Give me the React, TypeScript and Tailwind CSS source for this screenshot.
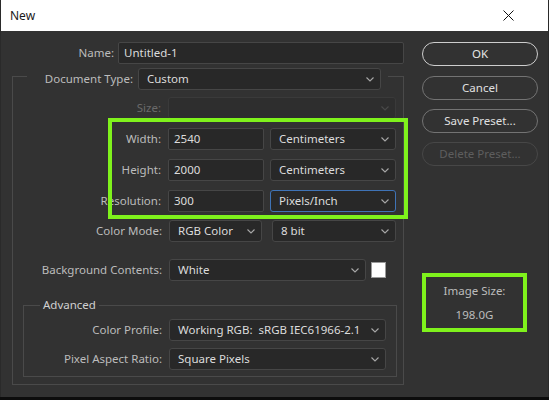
import React from 'react'

const font = { fontFamily: '"Noto Sans", "Open Sans", sans-serif' }

function Chevron({ dim }: { dim?: boolean }) {
  return (
    <svg width="8" height="5" viewBox="0 0 8 5" className="shrink-0">
      <polyline
        points="0.5,0.5 4,4 7.5,0.5"
        fill="none"
        stroke={dim ? '#4a4a4a' : '#a8a8a8'}
        strokeWidth="1.1"
      />
    </svg>
  )
}

function Select({
  value,
  width,
  active,
  disabled,
}: {
  value?: string
  width: string
  active?: boolean
  disabled?: boolean
}) {
  const border = active
    ? 'border-[#3f73b6]'
    : disabled
      ? 'border-[#3a3a3a]'
      : 'border-[#464646]'
  return (
    <div
      className={`${width} h-[22px] flex items-center justify-between pl-[8px] pr-[6px] rounded-[3px] border ${border} ${disabled ? 'bg-[#2e2e2e]' : 'bg-[#282828]'} text-[#dcdcdc]`}
    >
      <span className="whitespace-pre">{value}</span>
      <Chevron dim={disabled} />
    </div>
  )
}

function Input({ value, width }: { value: string; width: string }) {
  return (
    <div
      className={`${width} h-[22px] flex items-center pl-[5px] rounded-[2px] border border-[#464646] bg-[#282828] text-[#dcdcdc]`}
    >
      {value}
    </div>
  )
}

function Label({ text, width, dim }: { text: string; width: string; dim?: boolean }) {
  return (
    <span
      className={`${width} shrink-0 text-right whitespace-nowrap ${dim ? 'text-[#6a6a6a]' : 'text-[#bcbcbc]'}`}
    >
      {text}
    </span>
  )
}

function Button({ text, variant }: { text: string; variant: 'default' | 'normal' | 'disabled' }) {
  const cls =
    variant === 'default'
      ? 'border-[#cdcdcd] text-[#e6e6e6]'
      : variant === 'normal'
        ? 'border-[#737373] text-[#e0e0e0]'
        : 'border-[#474747] text-[#5e5e5e]'
  return (
    <div
      className={`w-[116px] h-[24px] flex items-center justify-center rounded-full border ${cls}`}
    >
      {text}
    </div>
  )
}

export default function App() {
  return (
    <div className="w-[549px] h-[400px] bg-[#0c0c0c] text-[11.5px] leading-[16px]" style={font}>
      <div className="relative w-[549px] h-[397px] flex flex-col border-l border-r border-[#2a2a2a] bg-[#323232]">
        {/* title bar */}
        <div className="h-[31px] shrink-0 bg-white flex items-center justify-between pl-[9px] pr-[34px]">
          <span className="text-[#1a1a1a] text-[12px]">New</span>
          <svg width="11" height="11" viewBox="0 0 11 11">
            <path d="M0.5 0.5 L10.5 10.5 M10.5 0.5 L0.5 10.5" stroke="#111" strokeWidth="1" />
          </svg>
        </div>

        <div className="flex">
          {/* left form */}
          <div className="w-[403px] shrink-0">
            <div className="flex items-center mt-[11px] h-[22px]">
              <Label text="Name:" width="w-[113px]" />
              <div className="ml-[4px]">
                <Input value="Untitled-1" width="w-[286px]" />
              </div>
            </div>

            <fieldset className="ml-[11px] mt-[-2px] w-[392px] border border-[#4a4a4a] pb-[7px]">
              <legend className="ml-[14px] flex items-center pt-[6px] pb-[1px] pr-[7px]">
                <Label text="Document Type:" width="w-[106px]" />
                <div className="ml-[5px]">
                  <Select value="Custom" width="w-[243px]" />
                </div>
              </legend>

              <div className="flex items-center mt-[6px]">
                <Label text="Size:" width="w-[148px]" dim />
                <div className="ml-[7px]">
                  <Select width="w-[228px]" disabled />
                </div>
              </div>

              <div className="flex items-center mt-[9px]">
                <Label text="Width:" width="w-[148px]" />
                <div className="ml-[7px] flex gap-[6px]">
                  <Input value="2540" width="w-[96px]" />
                  <Select value="Centimeters" width="w-[126px]" />
                </div>
              </div>

              <div className="flex items-center mt-[9px]">
                <Label text="Height:" width="w-[148px]" />
                <div className="ml-[7px] flex gap-[6px]">
                  <Input value="2000" width="w-[96px]" />
                  <Select value="Centimeters" width="w-[126px]" />
                </div>
              </div>

              <div className="flex items-center mt-[9px]">
                <Label text="Resolution:" width="w-[148px]" />
                <div className="ml-[7px] flex gap-[6px]">
                  <Input value="300" width="w-[96px]" />
                  <Select value="Pixels/Inch" width="w-[126px]" active />
                </div>
              </div>

              <div className="flex items-center mt-[8px]">
                <Label text="Color Mode:" width="w-[149px]" />
                <div className="ml-[7px] flex gap-[10px]">
                  <Select value="RGB Color" width="w-[93px]" />
                  <Select value="8 bit" width="w-[124px]" />
                </div>
              </div>

              <div className="flex items-center mt-[17px]">
                <Label text="Background Contents:" width="w-[149px]" />
                <div className="ml-[7px] flex items-center gap-[5px]">
                  <Select value="White" width="w-[197px]" />
                  <div className="w-[15px] h-[16px] bg-white border border-[#9a9a9a]" />
                </div>
              </div>

              <fieldset className="ml-[10px] mt-[16px] w-[374px] border border-[#4a4a4a] pb-[6px]">
                <legend className="ml-[16px] px-[3px] text-[#d0d0d0]">Advanced</legend>
                <div className="flex items-center mt-[6px]">
                  <Label text="Color Profile:" width="w-[138px]" />
                  <div className="ml-[7px]">
                    <Select value="Working RGB:  sRGB IEC61966-2.1" width="w-[217px]" />
                  </div>
                </div>
                <div className="flex items-center mt-[7px]">
                  <Label text="Pixel Aspect Ratio:" width="w-[138px]" />
                  <div className="ml-[7px]">
                    <Select value="Square Pixels" width="w-[217px]" />
                  </div>
                </div>
              </fieldset>
            </fieldset>
          </div>

          {/* right buttons */}
          <div className="ml-[18px] pt-[11px] flex flex-col">
            <Button text="OK" variant="default" />
            <div className="mt-[10px]">
              <Button text="Cancel" variant="normal" />
            </div>
            <div className="mt-[9px]">
              <Button text="Save Preset..." variant="normal" />
            </div>
            <div className="mt-[9px]">
              <Button text="Delete Preset..." variant="disabled" />
            </div>
            <div className="mt-[107px] w-[105px] h-[59px] border-[4px] border-[#7ff21c] flex flex-col items-center justify-center gap-[8px] text-[#bcbcbc]">
              <span>Image Size:</span>
              <span>198.0G</span>
            </div>
          </div>
        </div>

        {/* highlight drawn over the size fields */}
        <div className="absolute left-[107px] top-[118px] w-[300px] h-[101px] border-[4px] border-[#7ff21c] pointer-events-none" />
      </div>
    </div>
  )
}
